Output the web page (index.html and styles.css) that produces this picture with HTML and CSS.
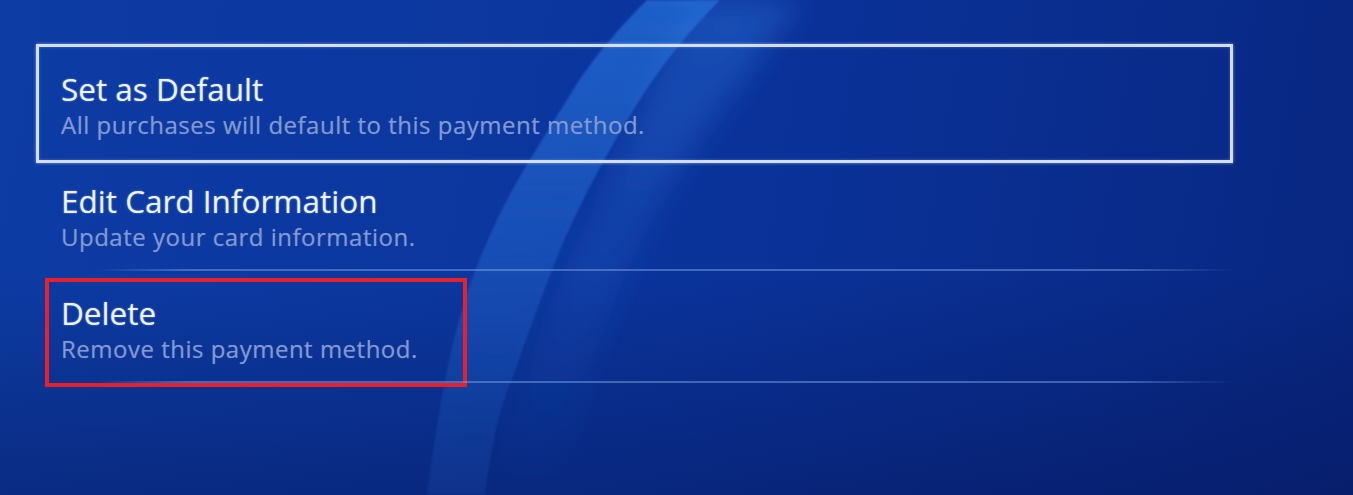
FILE: index.html
```html
<!DOCTYPE html>
<html lang="en">
<head>
<meta charset="utf-8">
<title>Payment Method</title>
<link rel="stylesheet" href="styles.css">
</head>
<body>
<div class="screen">
  <svg class="backdrop" viewBox="0 0 1353 495" preserveAspectRatio="none" aria-hidden="true">
    <defs>
      <linearGradient id="bandFade" x1="0" y1="0" x2="0" y2="1">
        <stop offset="0" stop-color="#2a7ae4" stop-opacity="0.62"/>
        <stop offset="0.45" stop-color="#2a74dc" stop-opacity="0.42"/>
        <stop offset="1" stop-color="#2566c8" stop-opacity="0.16"/>
      </linearGradient>
      <linearGradient id="glowFade" x1="0" y1="0" x2="0" y2="1">
        <stop offset="0" stop-color="#2a6fd8" stop-opacity="0.45"/>
        <stop offset="0.6" stop-color="#2a6fd8" stop-opacity="0.15"/>
        <stop offset="1" stop-color="#2a6fd8" stop-opacity="0"/>
      </linearGradient>
      <filter id="soft" x="-30%" y="-30%" width="160%" height="160%">
        <feGaussianBlur stdDeviation="14"/>
      </filter>
      <filter id="edge" x="-10%" y="-10%" width="120%" height="120%">
        <feGaussianBlur stdDeviation="1"/>
      </filter>
    </defs>
    <path d="M690 0 L800 0 C760 60 700 130 660 200 C620 280 580 380 560 495 L495 495 C510 400 545 300 590 220 C620 160 650 80 690 0 Z" fill="url(#glowFade)" filter="url(#soft)"/>
    <path d="M647 0 C622 25 590 60 567 100 C545 135 520 175 507 200 C490 232 470 280 462 310 C450 350 438 410 427 495 L485 495 C492 440 502 400 512 380 C522 350 540 300 560 250 C575 215 595 175 610 150 C630 115 660 60 720 0 Z" fill="url(#bandFade)" filter="url(#edge)"/>
  </svg>
  <ul class="menu">
    <li class="item selected">
      <div class="title">Set as Default</div>
      <div class="desc">All purchases will default to this payment method.</div>
    </li>
    <li class="item divided">
      <div class="title">Edit Card Information</div>
      <div class="desc">Update your card information.</div>
    </li>
    <li class="item divided">
      <div class="title">Delete</div>
      <div class="desc">Remove this payment method.</div>
      <div class="annotation"></div>
    </li>
  </ul>
</div>
</body>
</html>
```

FILE: styles.css
```css
html, body {
  margin: 0;
  padding: 0;
}

body {
  width: 1353px;
  height: 495px;
  overflow: hidden;
  font-family: "Open Sans", "Noto Sans", sans-serif;
}

.screen {
  position: relative;
  width: 1353px;
  height: 495px;
  overflow: hidden;
  background:
    linear-gradient(180deg, rgba(0, 0, 0, 0) 0%, rgba(0, 0, 0, 0) 55%, rgba(4, 14, 70, 0.35) 100%),
    linear-gradient(100deg, #0d3ca4 0%, #0b379f 35%, #0a3299 55%, #092c8c 80%, #082680 100%);
}

.backdrop {
  position: absolute;
  inset: 0;
  width: 100%;
  height: 100%;
  z-index: 0;
}

.menu {
  position: relative;
  z-index: 1;
  list-style: none;
  margin: 0 0 0 37px;
  padding: 47px 0 0 0;
  width: 1196px;
}

.item {
  position: relative;
  height: 112px;
  box-sizing: border-box;
  padding: 22px 0 0 24px;
}

.title {
  font-size: 31.5px;
  line-height: 40px;
  color: #edf2ff;
  text-shadow: 0 0 2px rgba(190, 215, 255, 0.55);
  white-space: nowrap;
}

.desc {
  margin-top: 1px;
  font-size: 24px;
  line-height: 30px;
  letter-spacing: 0.5px;
  color: #8399cf;
  text-shadow: 0 0 1px rgba(150, 175, 230, 0.4);
  white-space: nowrap;
}

.selected::before {
  content: "";
  position: absolute;
  top: -3px;
  bottom: -4px;
  left: -1px;
  right: 0;
  border: 3px solid #d3def6;
  box-shadow: 0 0 3px rgba(170, 200, 255, 0.7), inset 0 0 3px rgba(170, 200, 255, 0.4);
}

.divided::after {
  content: "";
  position: absolute;
  left: 60px;
  right: 0;
  bottom: 0;
  height: 2px;
  background: linear-gradient(90deg, rgba(120, 160, 230, 0) 0%, rgba(120, 160, 230, 0.5) 8%, rgba(120, 160, 230, 0.5) 90%, rgba(120, 160, 230, 0) 100%);
}

.annotation {
  position: absolute;
  left: 8px;
  top: 7px;
  width: 422px;
  height: 109px;
  box-sizing: border-box;
  border: 4px solid #e8202c;
}
```
